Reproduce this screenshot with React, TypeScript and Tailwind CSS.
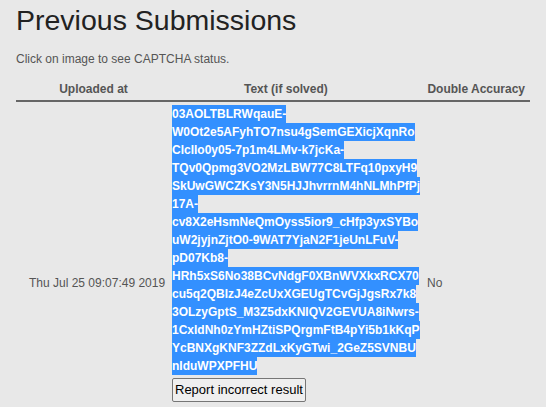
const lines = [
  "03AOLTBLRWqauE-",
  "W0Ot2e5AFyhTO7nsu4gSemGEXicjXqnRo",
  "Clcllo0y05-7p1m4LMv-k7jcKa-",
  "TQv0Qpmg3VO2MzLBW77C8LTFq10pxyH9",
  "SkUwGWCZKsY3N5HJJhvrrnM4hNLMhPfPj",
  "17A-",
  "cv8X2eHsmNeQmOyss5ior9_cHfp3yxSYBo",
  "uW2jyjnZjtO0-9WAT7YjaN2F1jeUnLFuV-",
  "pD07Kb8-",
  "HRh5xS6No38BCvNdgF0XBnWVXkxRCX70",
  "cu5q2QBlzJ4eZcUxXGEUgTCvGjJgsRx7k8",
  "3OLzyGptS_M3Z5dxKNIQV2GEVUA8iNwrs-",
  "1CxldNh0zYmHZtiSPQrgmFtB4pYi5b1kKqP",
  "YcBNXgKNF3ZZdLxKyGTwi_2GeZ5SVNBU",
  "nIduWPXPFHU",
];

export default function App() {
  return (
    <div
      className="min-h-[407px] w-full bg-[#e8e8e8] px-4 text-[12px] text-[#555]"
      style={{ fontFamily: '"Liberation Sans", Arial, sans-serif' }}
    >
      <h1 className="pt-[4px] text-[28.5px] leading-[32px] font-normal text-[#222]">
        Previous Submissions
      </h1>
      <p className="mt-[16px] leading-[14px]">Click on image to see CAPTCHA status.</p>

      <div className="mt-[16px] w-[514px]">
        <div className="flex border-b-2 border-[#666] pb-[4px] font-bold leading-[14px]">
          <div className="w-[155px] text-center">Uploaded at</div>
          <div className="w-[254px] pl-[73px]">Text (if solved)</div>
          <div className="flex-1 pr-[5px] text-right">Double Accuracy</div>
        </div>

        <div className="flex pt-[3px]">
          <div className="w-[155px] pt-[171px] pl-[13px] leading-[14px]">
            Thu Jul 25 09:07:49 2019
          </div>
          <div className="w-[254px] pl-[1px]">
            <div className="text-[12px] font-bold leading-[18px] text-white">
              {lines.map((l) => (
                <div key={l}>
                  <span className="inline-block bg-[#3390ff]">{l}</span>
                </div>
              ))}
            </div>
            <button className="mt-[3px] h-[24px] rounded-[2px] border border-[#767676] bg-[#efefef] px-[2px] text-[13px] leading-[16px] text-black">
              Report incorrect result
            </button>
          </div>
          <div className="flex-1 pt-[171px] pl-[2px] leading-[14px]">No</div>
        </div>
      </div>
    </div>
  );
}
